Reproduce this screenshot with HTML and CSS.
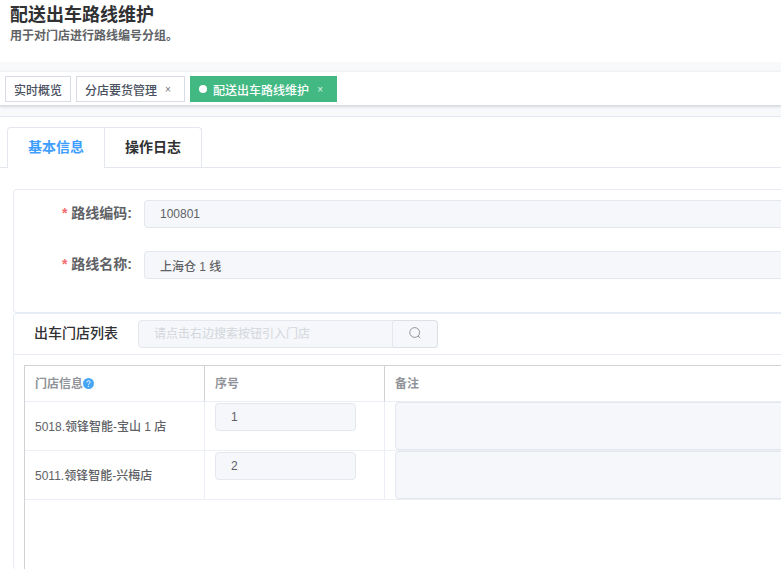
FILE: index.html
```html
<!DOCTYPE html>
<html lang="zh-CN">
<head>
  <meta charset="UTF-8">
  <title>配送出车路线维护</title>
  <link rel="stylesheet" href="styles.css">
</head>
<body>
  <header class="page-header">
    <h1>配送出车路线维护</h1>
    <p>用于对门店进行路线编号分组。</p>
  </header>

  <nav class="tags">
    <a class="tag" href="#">实时概览</a>
    <a class="tag" href="#">分店要货管理<span class="close">×</span></a>
    <a class="tag active" href="#"><span class="dot"></span>配送出车路线维护<span class="close">×</span></a>
  </nav>

  <main class="content">
    <div class="tabs" role="tablist">
      <button class="tab active" type="button" role="tab" aria-selected="true">基本信息</button>
      <button class="tab" type="button" role="tab" aria-selected="false">操作日志</button>
    </div>

    <section class="card form-card">
      <div class="form-item">
        <label for="route-code"><span class="required">*</span>路线编码:</label>
        <input class="input" id="route-code" type="text" value="100801" disabled>
      </div>
      <div class="form-item">
        <label for="route-name"><span class="required">*</span>路线名称:</label>
        <input class="input" id="route-name" type="text" value="上海仓 1 线" disabled>
      </div>
    </section>

    <section class="card list-card">
      <div class="card-header">
        <label for="store-search">出车门店列表</label>
        <div class="search">
          <input class="input" id="store-search" type="text" placeholder="请点击右边搜索按钮引入门店" disabled>
          <button type="button" aria-label="搜索" disabled>
            <svg width="14" height="14" viewBox="0 0 14 14" fill="none" stroke="#909399">
              <circle cx="6.7" cy="6.5" r="4.9"/>
              <path d="M10 10 L12.2 12"/>
            </svg>
          </button>
        </div>
      </div>
      <div class="table-wrap">
        <table>
          <thead>
            <tr>
              <th class="col">门店信息<svg class="help" width="11" height="11" viewBox="0 0 11 11">
                <circle cx="5.5" cy="5.5" r="5.5" fill="#46a6f5"/>
                <path d="M3.9 4.4 C3.9 2.2 7.1 2.2 7.1 4.2 C7.1 5.3 5.5 5.3 5.5 6.6" fill="none" stroke="#fff"/>
                <circle cx="5.5" cy="8.3" r="0.6" fill="#fff"/>
              </svg></th>
              <th class="col">序号</th>
              <th>备注</th>
            </tr>
          </thead>
          <tbody>
            <tr>
              <td>5018.领锋智能-宝山 1 店</td>
              <td class="top"><input class="input order" type="text" value="1" aria-label="序号" disabled></td>
              <td class="note"><textarea aria-label="备注" disabled></textarea></td>
            </tr>
            <tr>
              <td>5011.领锋智能-兴梅店</td>
              <td class="top"><input class="input order" type="text" value="2" aria-label="序号" disabled></td>
              <td class="note"><textarea aria-label="备注" disabled></textarea></td>
            </tr>
          </tbody>
        </table>
      </div>
    </section>
  </main>
</body>
</html>
```

FILE: styles.css
```css
* {
  box-sizing: border-box;
}
body {
  display: flex;
  flex-direction: column;
  min-height: 100vh;
  margin: 0;
  background: #f8f9fb;
  color: #606266;
  font-family: "Liberation Sans", "Noto Sans CJK SC", sans-serif;
  font-size: 12px;
  font-weight: 500;
}
input, textarea, button {
  font: inherit;
}

/* header */
.page-header {
  height: 62px;
  padding: 4px 10px;
  background: #fff;
}
.page-header h1 {
  margin: 0;
  color: #303133;
  font-size: 18px;
  line-height: 22px;
}
.page-header p {
  margin: 0;
  font-weight: bold;
  line-height: 20px;
}

/* opened pages */
.tags {
  display: flex;
  gap: 5px;
  margin: 10px 0;
  padding: 4px 5px 3px;
  background: #fff;
  border-bottom: 1px solid #d8dce5;
  box-shadow: 0 1px 3px rgba(0, 0, 0, 0.12), 0 0 3px rgba(0, 0, 0, 0.04);
}
.tag {
  display: flex;
  align-items: center;
  height: 26px;
  padding: 0 8px;
  border: 1px solid #d8dce5;
  color: #495060;
  text-decoration: none;
}
.tag.active {
  background: #42b983;
  border-color: #42b983;
  color: #fff;
}
.close {
  width: 16px;
  margin-left: 3px;
  font-size: 10px;
  text-align: center;
  opacity: 0.8;
}
.dot {
  width: 8px;
  height: 8px;
  margin-right: 6px;
  border-radius: 50%;
  background: #fff;
}

/* content */
.content {
  display: flex;
  flex-direction: column;
  flex: 1;
  padding-top: 10px;
  background: #fff;
  border-top: 1px solid #e4e7ed;
}
.tabs {
  display: flex;
  padding-left: 7px;
  border-bottom: 1px solid #e4e7ed;
}
.tab {
  height: 40px;
  padding: 0 20px 4px;
  background: #fff;
  border: 1px solid #e4e7ed;
  border-width: 1px 1px 0 0;
  border-radius: 0 4px 0 0;
  color: #303133;
  font-size: 14px;
  font-weight: bold;
}
.tab.active {
  height: 41px;
  margin-bottom: -1px;
  border-left-width: 1px;
  border-radius: 4px 0 0 0;
  color: #409eff;
}
.card {
  margin-left: 13px;
  border: 1px solid #e6ebf5;
  border-right: 0;
  border-radius: 4px 0 0 4px;
}
.form-card {
  display: flex;
  flex-direction: column;
  gap: 23px;
  margin-top: 21px;
  padding: 10px 0 33px;
}
.form-item {
  display: flex;
  align-items: center;
}
.form-item label {
  width: 130px;
  padding: 0 12px 4px 0;
  font-size: 14px;
  font-weight: bold;
  text-align: right;
}
.required {
  margin-right: 4px;
  color: #f56c6c;
}
.input {
  flex: 1;
  min-width: 0;
  height: 28px;
  padding: 0 15px;
  background: #f5f7fa;
  border: 1px solid #e4e7ed;
  border-radius: 4px;
  color: #606266;
}
.form-item .input {
  border-right: 0;
  border-radius: 4px 0 0 4px;
}
.input::placeholder {
  color: #d3d6dc;
  font-weight: normal;
}

/* store list */
.list-card {
  display: flex;
  flex-direction: column;
  flex: 1;
  border-bottom: 0;
}
.card-header {
  display: flex;
  align-items: center;
  gap: 20px;
  padding: 6px 20px;
  border-bottom: 1px solid #e6ebf5;
}
.card-header label {
  padding-bottom: 4px;
  color: #303133;
  font-size: 14px;
}
.search {
  display: flex;
  width: 300px;
}
.search .input {
  border-radius: 4px 0 0 4px;
}
.search button {
  display: flex;
  align-items: center;
  justify-content: center;
  width: 45px;
  padding: 0 0 2px;
  background: #f5f7fa;
  border: 1px solid #dcdfe6;
  border-left: 0;
  border-radius: 0 4px 4px 0;
}
.table-wrap {
  flex: 1;
  margin: 10px 0 0 10px;
  border: 1px solid #d0d2d6;
  border-width: 1px 0 0 1px;
}
table {
  width: 100%;
  border-spacing: 0;
  table-layout: fixed;
}
th, td {
  padding: 0 10px 2px;
  border-right: 1px solid #ebeef5;
  border-bottom: 1px solid #ebeef5;
  text-align: left;
}
th {
  height: 36px;
  border-right-color: #d0d2d6;
  color: #909399;
}
th.col {
  width: 180px;
}
th:last-child, td:last-child {
  border-right: 0;
}
td {
  height: 49px;
}
.help {
  vertical-align: -1px;
}
.top {
  padding-top: 1px;
  vertical-align: top;
}
.order {
  display: block;
  width: 141px;
}
.note {
  padding: 0 0 0 10px;
}
textarea {
  display: block;
  width: 100%;
  height: 48px;
  padding: 5px 15px;
  background: #f5f7fa;
  border: 1px solid #e4e7ed;
  border-right: 0;
  border-radius: 4px 0 0 4px;
  resize: none;
}
```
